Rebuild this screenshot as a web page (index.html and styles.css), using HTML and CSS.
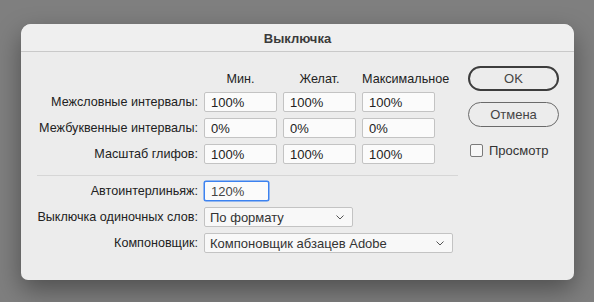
FILE: index.html
```html
<!DOCTYPE html>
<html lang="ru">
<head>
<meta charset="utf-8">
<title>Выключка</title>
<link rel="stylesheet" href="styles.css">
</head>
<body>
<div class="dialog">
  <div class="titlebar">Выключка</div>
  <div class="content">
    <div class="main">
      <div class="grid">
        <div></div>
        <div class="head center">Мин.</div>
        <div class="head center">Желат.</div>
        <div class="head left">Максимальное</div>

        <div class="label">Межсловные интервалы:</div>
        <input class="field" type="text" value="100%">
        <input class="field" type="text" value="100%">
        <input class="field" type="text" value="100%">

        <div class="label">Межбуквенные интервалы:</div>
        <input class="field" type="text" value="0%">
        <input class="field" type="text" value="0%">
        <input class="field" type="text" value="0%">

        <div class="label">Масштаб глифов:</div>
        <input class="field" type="text" value="100%">
        <input class="field" type="text" value="100%">
        <input class="field" type="text" value="100%">
      </div>
      <div class="sep"></div>
      <div class="grid2">
        <div class="label">Автоинтерлиньяж:</div>
        <div><input class="field focus w-auto" type="text" value="120%"></div>

        <div class="label">Выключка одиночных слов:</div>
        <div><div class="select w-single"><span>По формату</span><svg class="chev" width="8" height="5" viewBox="0 0 8 5"><path d="M0.5 0.5 L4 4 L7.5 0.5" fill="none" stroke="#555" stroke-width="1"/></svg></div></div>

        <div class="label">Компоновщик:</div>
        <div><div class="select w-comp"><span>Компоновщик абзацев Adobe</span><svg class="chev" width="8" height="5" viewBox="0 0 8 5"><path d="M0.5 0.5 L4 4 L7.5 0.5" fill="none" stroke="#555" stroke-width="1"/></svg></div></div>
      </div>
    </div>
    <div class="side">
      <button class="btn btn-default">OK</button>
      <button class="btn">Отмена</button>
      <label class="check"><span class="box"></span>Просмотр</label>
    </div>
  </div>
</div>
</body>
</html>
```
FILE: styles.css
```css
html, body {
  margin: 0;
  padding: 0;
}
body {
  width: 594px;
  height: 302px;
  background: #7f7f7f;
  font-family: "Liberation Sans", Arial, sans-serif;
  font-size: 13px;
  color: #222;
  overflow: hidden;
}
.dialog {
  margin: 24px 0 0 21px;
  width: 553px;
  height: 256px;
  background: #ececec;
  border-radius: 10px 10px 7px 7px;
  box-shadow: 0 10px 26px rgba(0, 0, 0, 0.38);
  overflow: hidden;
}
.titlebar {
  height: 27px;
  border-bottom: 1px solid #c9c9c9;
  text-align: center;
  font-weight: bold;
  font-size: 13px;
  line-height: 29px;
  color: #3b3b3b;
  background: #efefef;
}
.content {
  display: flex;
  gap: 10px;
  padding: 14px 0 0 16px;
}
.main {
  width: 421px;
  padding-top: 4px;
}
.grid {
  display: grid;
  grid-template-columns: 161px 73px 73px 73px;
  grid-template-rows: 16px 20px 20px 20px;
  column-gap: 6px;
  row-gap: 6px;
  align-items: center;
}
.head {
  color: #222;
  line-height: 16px;
  font-size: 12.6px;
  padding-top: 2px;
}
.head.center { text-align: center; }
.head.left { text-align: left; }
.label {
  text-align: right;
  white-space: nowrap;
  color: #222;
  line-height: 20px;
  font-size: 12.6px;
}
.field {
  box-sizing: border-box;
  width: 100%;
  height: 20px;
  margin: 0;
  padding: 1px 6px 0;
  border: 1px solid #c3c3c3;
  border-radius: 2px;
  background: #fbfbfb;
  font-family: "Liberation Sans", Arial, sans-serif;
  font-size: 13px;
  color: #222;
  outline: none;
}
.sep {
  height: 1px;
  background: #d6d6d6;
  margin: 11px 0 5px;
}
.grid2 {
  display: grid;
  grid-template-columns: 161px auto;
  grid-auto-rows: 20px;
  column-gap: 6px;
  row-gap: 6px;
  align-items: center;
}
.field.focus {
  border: 1px solid #3c82f0;
  box-shadow: 0 0 0 0.5px #3c82f0;
  color: #444;
}
.w-auto { width: 65px; display: block; }
.select {
  box-sizing: border-box;
  height: 20px;
  display: flex;
  align-items: center;
  justify-content: space-between;
  padding: 1px 8px 0 5px;
  border: 1px solid #c3c3c3;
  border-radius: 2px;
  background: #f8f8f8;
  color: #333;
}
.w-single { width: 149px; }
.w-comp { width: 249px; }
.chev { display: block; margin-top: -1px; }
.side {
  width: 91px;
  display: flex;
  flex-direction: column;
  align-items: flex-start;
}
.btn {
  box-sizing: border-box;
  width: 91px;
  height: 25px;
  margin: 0 0 11px;
  padding: 0;
  border: 1px solid #6a6a6a;
  border-radius: 13px;
  background: transparent;
  font-family: "Liberation Sans", Arial, sans-serif;
  font-size: 13px;
  color: #444;
}
.btn-default {
  border: 2px solid #3d3d3d;
}
.check {
  display: flex;
  align-items: center;
  gap: 6px;
  padding-left: 2px;
  margin-top: 5px;
  color: #333;
}
.box {
  display: block;
  width: 11px;
  height: 11px;
  border: 1px solid #7a7a7a;
  border-radius: 2px;
  background: #f7f7f7;
}
```
